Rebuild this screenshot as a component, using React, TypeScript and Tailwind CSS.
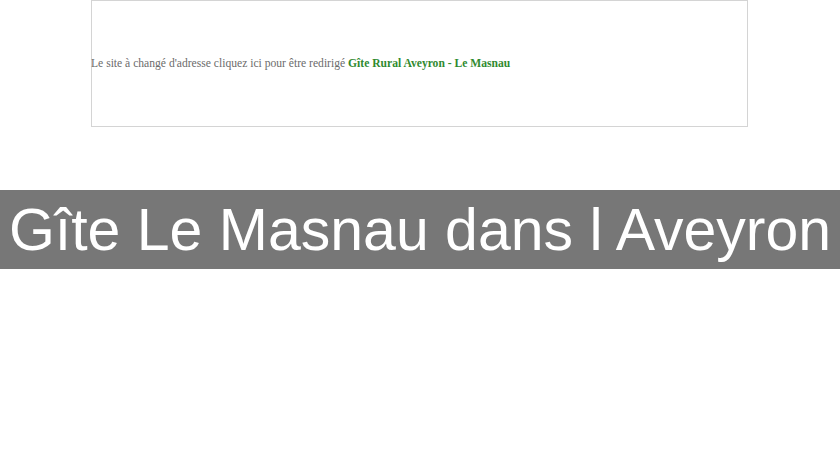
export default function App() {
  return (
    <div className="w-[840px] h-[460px] bg-white overflow-hidden">
      <div className="ml-[91px] w-[657px] h-[127px] border border-[#d4d4d4] flex items-center">
        <p className="text-[11.6px] text-[#6b6b6b] font-['Liberation_Serif',serif] leading-none -ml-px">
          Le site à changé d'adresse cliquez ici pour être redirigé{' '}
          <span className="font-bold text-[#2f8a2f]">Gîte Rural Aveyron - Le Masnau</span>
        </p>
      </div>
      <div className="mt-[63px] h-[79px] bg-[#777777] flex items-center justify-center">
        <h1 className="text-white text-[59px] leading-none pt-[2px] font-['Liberation_Sans',Arial,sans-serif] whitespace-nowrap">
          Gîte Le Masnau dans l Aveyron
        </h1>
      </div>
    </div>
  );
}
